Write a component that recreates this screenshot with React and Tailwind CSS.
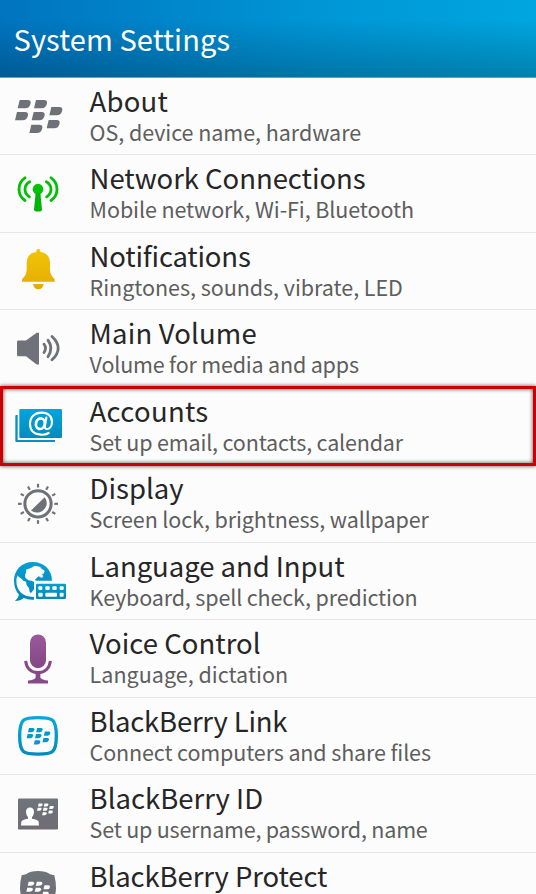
import React from "react";

function Gradient({ id, from, to }) {
  return (
    <linearGradient id={id} x1="0" y1="0" x2="0" y2="1">
      <stop offset="0" stopColor={from} />
      <stop offset="1" stopColor={to} />
    </linearGradient>
  );
}

// Icon canvas: three drawing units per CSS pixel, 80px column by one 77.5px row.
function Icon({ top, children }) {
  return (
    <svg className="-mt-[0.5px] h-[77.5px] w-20 shrink-0" viewBox={`0 ${top} 240 232.5`}>
      {children}
    </svg>
  );
}

const LOZENGE = "M6 0H30Q40 0 39 9Q37 25 22 25H0Z";
const LOGO_SPOTS = [[8, 0], [57, 0], [0, 36], [50, 36], [103, 21], [95, 60], [43, 74]];

function Logo({ x, y, scale = 1, fill }) {
  return (
    <g transform={`translate(${x} ${y}) scale(${scale})`} fill={fill}>
      {LOGO_SPOTS.map(([dx, dy]) => (
        <path key={`${dx}-${dy}`} d={LOZENGE} transform={`translate(${dx} ${dy})`} />
      ))}
    </g>
  );
}

const AboutIcon = () => (
  <Icon top={-9}>
    <Logo x={45} y={60} fill="#6f7178" />
  </Icon>
);

const NetworkIcon = () => (
  <Icon top={223.5}>
    <g fill="none" stroke="#04bf08" strokeWidth="8.5" strokeLinecap="round">
      <path d="M75 292Q57 304 57 326T75 360M89 304Q75 312 75 326T88 349" />
      <path d="M153 292Q171 304 171 326T153 360M139 304Q153 312 153 326T140 349" />
    </g>
    <circle cx="114" cy="326" r="16" fill="#04c20a" />
    <path d="M107 336H121L126 387Q126 393 120 393H108Q102 393 102 387Z" fill="#02b30a" />
  </Icon>
);

const BellIcon = () => (
  <Icon top={6}>
    <defs><Gradient id="bell" from="#f3c50a" to="#e3ab00" /></defs>
    <path
      d="M109 66Q108 57 115 57T121 66Q149 70 150 98V120Q151 136 164 148V155H66V148Q79 136 80 120V98Q81 70 109 66ZM99 162H131Q128 178 115 178T99 162Z"
      fill="url(#bell)"
    />
  </Icon>
);

const VolumeIcon = () => (
  <Icon top={238.5}>
    <path d="M54 330H78L110 307H117V402H110L78 377H54Q51 377 51 372V335Q51 330 54 330Z" fill="#707279" />
    <path
      d="M132 341Q141 353 132 366M144 329Q161 353 144 379M156 318Q193 353 156 388"
      fill="none" stroke="#707279" strokeWidth="8.5" strokeLinecap="round"
    />
  </Icon>
);

const AccountsIcon = () => (
  <Icon top={21}>
    <defs><Gradient id="card" from="#04a4db" to="#028cbc" /></defs>
    <path d="M53 105H49Q46 105 46 108V183Q46 186 49 186H165V180H53Z" fill="#0293c6" />
    <rect x="58" y="87" width="128" height="87" rx="3" fill="url(#card)" />
    <g fill="none" stroke="#fff" strokeLinecap="round">
      <path d="M146 159Q136 165 122 164C100 163 90 149 90 132C90 112 104 98 125 98C145 98 156 110 156 125C156 140 148 148 140 147Q133 146 135 137L139 113" strokeWidth="6.5" />
      <ellipse cx="121" cy="131" rx="13" ry="16" transform="rotate(14 121 131)" strokeWidth="8" />
    </g>
  </Icon>
);

const RAYS = [0, 30, 60, 90, 120, 150, 180, 210, 240, 270, 300, 330];

const DisplayIcon = () => (
  <Icon top={253.5}>
    <circle cx="114" cy="370" r="39.5" fill="none" stroke="#707178" strokeWidth="9" />
    <path d="M93 390L134 350Q143 362 139 376Q134 390 119 395Q104 399 93 390Z" fill="#707178" />
    {RAYS.map((a) => (
      <path key={a} d="M114 310V321" stroke="#707178" strokeWidth="6.5" transform={`rotate(${a} 114 370)`} />
    ))}
  </Icon>
);

const LanguageIcon = () => (
  <Icon top={6}>
    <defs><Gradient id="globe" from="#069fd3" to="#0288b8" /></defs>
    <path d="M98 66C132 66 156 90 156 122H102V179Q84 180 71 174Q61 183 45 183Q54 175 57 164Q42 147 42 122C42 90 66 66 98 66Z" fill="url(#globe)" />
    <path
      d="M53 106Q56 112 62 114L70 122L78 125L80 136L87 144L89 156L93 159L102 148L105 137L103 126L94 122L85 121L76 113L75 105L80 94L86 91L94 93L95 85L104 80H120L125 87L134 92L131 101L123 101L130 108L126 114L116 109L110 114L104 120L112 124H120V200H102V171Q82 172 69 163Q49 149 49 122Q50 112 53 106Z"
      fill="#fcfcfc"
    />
    <path d="M78 89L94 83L103 78L113 79L120 84L131 91L128 103L120 106L112 103L107 109L100 115L91 111L84 116L76 108L80 100Z" fill="#fcfcfc" />
    <rect x="104" y="127" width="98" height="54" rx="6" fill="#fcfcfc" />
    <rect x="108" y="131" width="90" height="46" rx="4" fill="url(#globe)" />
    <g fill="#fcfcfc">
      <rect x="115" y="139" width="12" height="11" rx="3" />
      <rect x="136" y="139" width="13" height="11" rx="3" />
      <rect x="157" y="139" width="13" height="11" rx="3" />
      <rect x="179" y="139" width="12" height="11" rx="3" />
      <rect x="115" y="158" width="13" height="12" rx="3" />
      <rect x="136" y="158" width="35" height="12" rx="3" />
      <rect x="179" y="158" width="12" height="12" rx="3" />
    </g>
  </Icon>
);

const MicIcon = () => (
  <Icon top={238.5}>
    <defs><Gradient id="mic" from="#995a9c" to="#834784" /></defs>
    <rect x="90" y="282" width="48" height="101" rx="24" fill="url(#mic)" />
    <path d="M77 361C79 384 94 396 114 396S149 384 151 361" fill="none" stroke="#864a88" strokeWidth="9" />
    <path d="M107 396H121V411Q125 419 144 420V429H84V420Q103 419 107 411Z" fill="#864a88" />
  </Icon>
);

const LinkIcon = () => (
  <Icon top={-9}>
    <defs><Gradient id="link" from="#06a8dc" to="#028cbc" /></defs>
    <path
      d="M114 53C157 53 169 56 169 108S157 162.500 114 162.500S59 160 59 108S71 53 114 53Z"
      fill="none" stroke="url(#link)" strokeWidth="10"
    />
    <Logo x={80} y={84} scale={0.5} fill="#0298cb" />
  </Icon>
);

const IdIcon = () => (
  <Icon top={223.5}>
    <defs><Gradient id="idcard" from="#6d757b" to="#726b74" /></defs>
    <rect x="54" y="294" width="120" height="93" rx="4" fill="url(#idcard)" />
    <Logo x={111} y={309} scale={0.355} fill="#fff" />
    <path
      d="M90 321Q102 321 102 335Q101 345 96 350V355Q114 358 116 364L117 375H63L64 364Q66 358 84 355V350Q79 345 78 335Q78 321 90 321Z"
      fill="#fff"
    />
  </Icon>
);

const ProtectIcon = () => (
  <Icon top={456}>
    <defs><Gradient id="shield" from="#6d757b" to="#726b74" /></defs>
    <path d="M114 513Q137 513 150 523L163 526Q168 545 168 565Q166 620 114 635Q62 620 60 565Q60 545 65 526L78 523Q91 513 114 513Z" fill="url(#shield)" />
    <Logo x={79} y={545} scale={0.5} fill="#fff" />
  </Icon>
);

const ROWS = [
  { icon: AboutIcon, title: "About", tt: "tracking-[0.2px]", sub: "OS, device name, hardware", st: "tracking-[-0.05px]" },
  { icon: NetworkIcon, title: "Network Connections", tt: "tracking-[-0.04px]", sub: "Mobile network, Wi-Fi, Bluetooth", st: "tracking-[-0.09px]" },
  { icon: BellIcon, title: "Notifications", tt: "tracking-[-0.19px]", sub: "Ringtones, sounds, vibrate, LED", st: "tracking-[-0.04px]" },
  { icon: VolumeIcon, title: "Main Volume", tt: "tracking-[0.15px]", sub: "Volume for media and apps", st: "tracking-[-0.19px]" },
  { icon: AccountsIcon, title: "Accounts", tt: "tracking-[0.3px]", sub: "Set up email, contacts, calendar", st: "tracking-[-0.17px]" },
  { icon: DisplayIcon, title: "Display", tt: "tracking-[0px]", sub: "Screen lock, brightness, wallpaper", st: "tracking-[-0.13px]" },
  { icon: LanguageIcon, title: "Language and Input", tt: "tracking-[-0.05px]", sub: "Keyboard, spell check, prediction", st: "tracking-[-0.15px]" },
  { icon: MicIcon, title: "Voice Control", tt: "tracking-[0.04px]", sub: "Language, dictation", st: "tracking-[0.02px]" },
  { icon: LinkIcon, title: "BlackBerry Link", tt: "tracking-[-0.22px]", sub: "Connect computers and share files", st: "tracking-[-0.13px]" },
  { icon: IdIcon, title: "BlackBerry ID", tt: "tracking-[0px]", sub: "Set up username, password, name", st: "tracking-[-0.21px]" },
  { icon: ProtectIcon, title: "BlackBerry Protect", tt: "tracking-[-0.11px]" },
];

function Row({ icon: RowIcon, title, tt, sub, st, highlighted }) {
  return (
    <li className="relative flex h-[77.5px] border-b border-[#e6e6e6]">
      <RowIcon />
      <div className="flex flex-col whitespace-nowrap pl-[9.6px] pt-1.5">
        <span className={`text-[27.5px] leading-8 text-[#262626] ${tt}`}>{title}</span>
        {sub && <span className={`mt-1 text-[21.5px] leading-6 text-[#5e5e5e] ${st}`}>{sub}</span>}
      </div>
      {highlighted && (
        <div className="absolute inset-x-0 -top-[1.5px] z-10 h-20 border-3 border-[#cc0000] shadow-[0_0_4px_rgba(0,0,0,0.7),inset_0_0_4px_rgba(0,0,0,0.7)]" />
      )}
    </li>
  );
}

export default function App() {
  return (
    <div className="flex h-[894px] w-[536px] flex-col overflow-hidden bg-[#fcfcfc] font-['Noto_Sans_CJK_SC','Noto_Sans',sans-serif]">
      <header className="relative z-10 h-[78px] shrink-0 border-b border-[#6b9fb8] bg-[linear-gradient(to_bottom,transparent_25%,rgba(0,0,0,0.22)_100%),linear-gradient(to_right,#0074bf,#0096d6_60%,#00a6e0)] pl-[13.5px] pt-5">
        <h1 className="text-[29px] leading-9 tracking-[0.1px] text-white">System Settings</h1>
      </header>
      <ul className="-mt-[0.5px]">
        {ROWS.map((row) => (
          <Row key={row.title} {...row} highlighted={row.title === "Accounts"} />
        ))}
      </ul>
    </div>
  );
}
